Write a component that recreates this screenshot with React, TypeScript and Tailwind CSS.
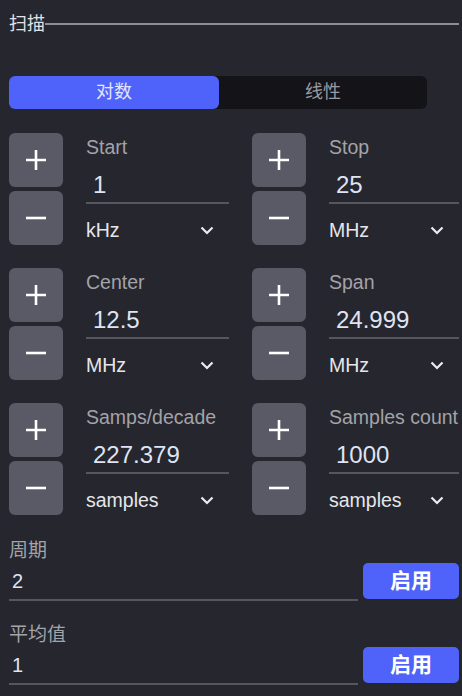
const fields = [
  { label: "Start", value: "1", unit: "kHz" },
  { label: "Stop", value: "25", unit: "MHz" },
  { label: "Center", value: "12.5", unit: "MHz" },
  { label: "Span", value: "24.999", unit: "MHz" },
  { label: "Samps/decade", value: "227.379", unit: "samples" },
  { label: "Samples count", value: "1000", unit: "samples" },
];

const settings = [
  { label: "周期", value: "2" },
  { label: "平均值", value: "1" },
];

function PlusIcon() {
  return (
    <svg width="22" height="22" viewBox="0 0 22 22">
      <path d="M11 1v20M1 11h20" stroke="#ffffff" strokeWidth="2.6" />
    </svg>
  );
}

function MinusIcon() {
  return (
    <svg width="22" height="22" viewBox="0 0 22 22">
      <path d="M1 11h20" stroke="#ffffff" strokeWidth="2.6" />
    </svg>
  );
}

function Chevron() {
  return (
    <svg width="14" height="9" viewBox="0 0 14 9">
      <path d="M1.5 1.5l5.5 5.5 5.5-5.5" fill="none" stroke="#ececf0" strokeWidth="2.2" />
    </svg>
  );
}

function StepField({ label, value, unit }: { label: string; value: string; unit: string }) {
  return (
    <div className="flex gap-[23px]">
      <div className="flex flex-col gap-[4px] shrink-0">
        <button className="w-[54px] h-[54px] rounded-[6px] bg-[#5a5966] flex items-center justify-center">
          <PlusIcon />
        </button>
        <button className="w-[54px] h-[54px] rounded-[6px] bg-[#5a5966] flex items-center justify-center">
          <MinusIcon />
        </button>
      </div>
      <div className="flex-1 min-w-0 flex flex-col pt-[3px]">
        <div className="text-[19.5px] leading-[22px] text-[#a3a3a8] whitespace-nowrap">{label}</div>
        <div className="mt-[13px] pb-[3px] border-b-2 border-[#56565f]">
          <div className="pl-[7px] text-[24px] leading-[28px] text-[#dfe3f3]">{value}</div>
        </div>
        <div className="mt-[15px] flex items-center justify-between pr-[15px]">
          <span className="text-[19.5px] leading-[22px] text-[#e6e6ea]">{unit}</span>
          <Chevron />
        </div>
      </div>
    </div>
  );
}

export default function App() {
  return (
    <div className="w-[462px] h-[696px] overflow-hidden bg-[#25262e] pl-[9px] pr-[3px] font-['Liberation_Sans','Noto_Sans_CJK_SC',sans-serif]">
      <div className="flex items-center pt-[12px]">
        <span className="text-[18px] leading-[24px] text-[#e2e2e6]">扫描</span>
        <div className="flex-1 h-[2px] bg-[#8e8e95]" />
      </div>

      <div className="mt-[40px] w-[418px] h-[33px] flex rounded-[6px] bg-[#141418]">
        <div className="w-[210px] rounded-[6px] bg-[#4f63fb] flex items-center justify-center text-[18px] text-[#e4e6ff]">
          对数
        </div>
        <div className="flex-1 flex items-center justify-center text-[18px] text-[#9a9aa0]">线性</div>
      </div>

      <div className="mt-[24px] grid grid-cols-[220px_1fr] gap-x-[23px] gap-y-[23px]">
        {fields.map((f) => (
          <StepField key={f.label} label={f.label} value={f.value} unit={f.unit} />
        ))}
      </div>

      <div className="mt-[24px] flex flex-col gap-[22px]">
        {settings.map((s) => (
          <div key={s.label} className="flex items-end gap-[5px]">
            <div className="flex-1 flex flex-col pb-[5px] border-b-2 border-[#56565f]">
              <div className="text-[19px] leading-[24px] text-[#a3a3a8]">{s.label}</div>
              <div className="mt-[5px] pl-[3px] text-[20px] leading-[26px] text-[#dfe3f3]">{s.value}</div>
            </div>
            <button className="w-[96px] h-[36px] mb-[2px] rounded-[5px] bg-[#4f63fb] text-white text-[21px] font-bold">
              启用
            </button>
          </div>
        ))}
      </div>
    </div>
  );
}
